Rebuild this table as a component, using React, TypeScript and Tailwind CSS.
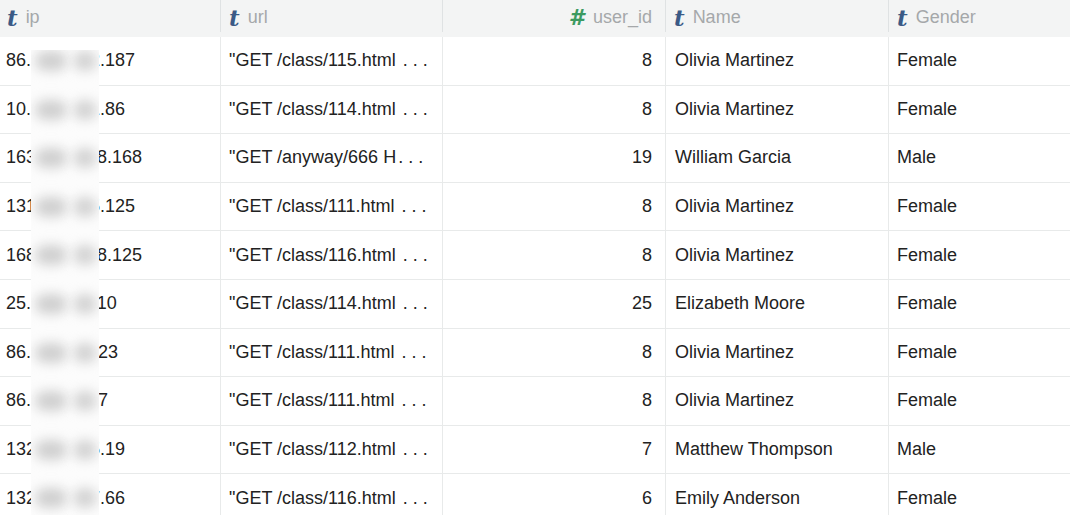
import React from "react";

type Row = {
  p: string;
  s: string;
  sx: number;
  url: string;
  id: number;
  name: string;
  g: string;
};

const rows: Row[] = [
  { p: "86.", s: "2.187", sx: 90, url: "\"GET /class/115.html ", id: 8, name: "Olivia Martinez", g: "Female" },
  { p: "10.", s: "1.86", sx: 90, url: "\"GET /class/114.html ", id: 8, name: "Olivia Martinez", g: "Female" },
  { p: "163", s: "58.168", sx: 87, url: "\"GET /anyway/666 H", id: 19, name: "William Garcia", g: "Male" },
  { p: "131", s: "5.125", sx: 90, url: "\"GET /class/111.html ", id: 8, name: "Olivia Martinez", g: "Female" },
  { p: "168", s: "58.125", sx: 87, url: "\"GET /class/116.html ", id: 8, name: "Olivia Martinez", g: "Female" },
  { p: "25.", s: "110", sx: 88, url: "\"GET /class/114.html ", id: 25, name: "Elizabeth Moore", g: "Female" },
  { p: "86.", s: "123", sx: 88, url: "\"GET /class/111.html ", id: 8, name: "Olivia Martinez", g: "Female" },
  { p: "86.", s: "17", sx: 88, url: "\"GET /class/111.html ", id: 8, name: "Olivia Martinez", g: "Female" },
  { p: "132", s: "5.19", sx: 90, url: "\"GET /class/112.html ", id: 7, name: "Matthew Thompson", g: "Male" },
  { p: "132", s: "7.66", sx: 90, url: "\"GET /class/116.html ", id: 6, name: "Emily Anderson", g: "Female" },
];

const cols = "grid grid-cols-[221px_222px_223px_223px_1fr]";

function TIcon() {
  return (
    <span className="text-[#3b5a86] font-bold italic text-[23px] leading-none [font-family:'DejaVu_Serif',serif] mr-[8px]">
      t
    </span>
  );
}

function HashIcon() {
  return (
    <span className="text-[#3c9a61] font-bold italic text-[22px] leading-none [font-family:'DejaVu_Sans',sans-serif] mr-[9px]">
      #
    </span>
  );
}

function HeadCell({
  children,
  right,
  first,
  last,
}: {
  children: React.ReactNode;
  right?: boolean;
  first?: boolean;
  last?: boolean;
}) {
  return (
    <div className="relative flex h-[37px] items-center">
      <div
        className={
          "flex w-full items-center pb-[2px] " +
          (right ? "justify-end pr-[14px] " : first ? "pl-[7px] " : "pl-[8px] ")
        }
      >
        {children}
      </div>
      {!last && <div className="absolute right-0 top-0 h-[32px] w-px bg-[#dfe2e3]" />}
    </div>
  );
}

export default function App() {
  return (
    <div className="relative h-[515px] w-[1070px] overflow-hidden bg-white text-[18px] text-[#222222] [font-family:'Liberation_Sans',Arial,sans-serif]">
      <div className={cols + " bg-[#f3f4f4] text-[18px] text-[#a5a8aa]"}>
        <HeadCell first>
          <TIcon />
          <span>ip</span>
        </HeadCell>
        <HeadCell>
          <TIcon />
          <span>url</span>
        </HeadCell>
        <HeadCell right>
          <HashIcon />
          <span>user_id</span>
        </HeadCell>
        <HeadCell>
          <TIcon />
          <span>Name</span>
        </HeadCell>
        <HeadCell last>
          <TIcon />
          <span>Gender</span>
        </HeadCell>
      </div>

      {rows.map((r, i) => (
        <div key={i} className={cols + " h-[48.6px] border-b border-[#e8eaea]"}>
          <div className="flex items-center whitespace-nowrap border-r border-[#e8eaea] pl-[6px]">
            <span className="inline-block w-[25px]">{r.p}</span>
            <span style={{ marginLeft: r.sx - 31 }}>{r.s}</span>
          </div>
          <div className="flex items-center whitespace-pre border-r border-[#e8eaea] pl-[8px]">
            <span>{r.url}</span>
            <span className="ml-[2px] tracking-[5px]">...</span>
          </div>
          <div className="flex items-center justify-end border-r border-[#e8eaea] pr-[13px]">
            {r.id}
          </div>
          <div className="flex items-center whitespace-nowrap border-r border-[#e8eaea] pl-[9px]">
            {r.name}
          </div>
          <div className="flex items-center whitespace-nowrap pl-[8px]">{r.g}</div>
        </div>
      ))}

      {/* privacy blur strip over the ip column */}
      <div className="absolute left-[31px] top-[50px] bottom-0 w-[68px] overflow-hidden bg-[#fcfcfc]">
        <div className="flex flex-col -mt-[13px]">
          {rows.map((_, i) => (
            <div key={i} className="relative h-[48.6px]">
              <div className="absolute left-[4px] top-[14px] h-[20px] w-[32px] rounded-full bg-[#d0d0d0] blur-[6px]" />
              <div className="absolute left-[42px] top-[14px] h-[20px] w-[24px] rounded-full bg-[#d3d3d3] blur-[6px]" />
            </div>
          ))}
        </div>
      </div>
    </div>
  );
}
